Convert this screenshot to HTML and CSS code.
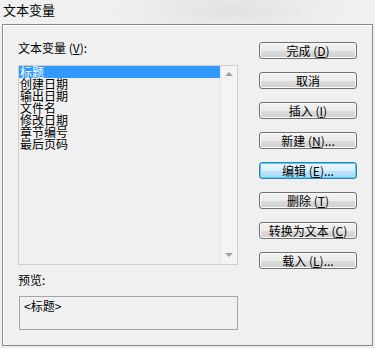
FILE: index.html
```html
<!DOCTYPE html>
<html lang="zh">
<head>
<meta charset="utf-8">
<link rel="stylesheet" href="styles.css">
</head>
<body>
<div class="title">文本变量</div>
<div class="frame">
  <div class="left">
    <div class="label">文本变量 (<u>V</u>):</div>
    <div class="listbox">
      <ul class="items">
        <li class="sel">标题</li>
        <li>创建日期</li>
        <li>输出日期</li>
        <li>文件名</li>
        <li>修改日期</li>
        <li>章节编号</li>
        <li>最后页码</li>
      </ul>
      <div class="scroll">
        <span class="arr up"></span>
        <span class="arr down"></span>
      </div>
    </div>
    <div class="label plabel">预览:</div>
    <div class="preview">&lt;标题&gt;</div>
  </div>
  <div class="buttons">
    <div class="btn">完成 (<u>D</u>)</div>
    <div class="btn">取消</div>
    <div class="btn">插入 (<u>I</u>)</div>
    <div class="btn">新建 (<u>N</u>)...</div>
    <div class="btn def">编辑 (<u>E</u>)...</div>
    <div class="btn">删除 (<u>T</u>)</div>
    <div class="btn">转换为文本 (<u>C</u>)</div>
    <div class="btn">载入 (<u>L</u>)...</div>
  </div>
</div>
</body>
</html>
```
FILE: styles.css
```css
html, body {
  margin: 0;
  padding: 0;
}
body {
  width: 375px;
  height: 348px;
  overflow: hidden;
  background: radial-gradient(ellipse 120px 30px at 230px 10px, #e2e2e2, #f0f0f0 100%) , #f0f0f0;
  font-family: "Noto Sans CJK SC", "Noto Sans", sans-serif;
  font-size: 12px;
  color: #000;
}
.title {
  height: 24px;
  padding-left: 3px;
  font-size: 13px;
  line-height: 20px;
}
.frame {
  margin-left: 2px;
  width: 369px;
  height: 320px;
  border: 1px solid #8a8a8a;
  box-shadow: inset 1px 1px 0 #fff;
  display: flex;
  background: #f0f0f0;
}
.left {
  padding: 16px 0 0 15px;
  width: 220px;
}
.label {
  line-height: 14px;
  height: 14px;
  margin-bottom: 10px;
}
u { text-decoration: underline; }
.listbox {
  height: 198px;
  border: 1px solid #cfcfcf;
  display: flex;
  background: #f0f0f0;
}
.items {
  list-style: none;
  margin: 0;
  padding: 0;
  width: 201px;
}
.items li {
  height: 12px;
  line-height: 12px;
  padding-left: 1px;
}
.items li.sel {
  background: #3399ff;
  color: #fff;
}
.scroll {
  width: 16px;
  border-left: 1px solid #e6e6e6;
  background: #f4f4f4;
  display: flex;
  flex-direction: column;
  justify-content: space-between;
  align-items: center;
  padding: 6px 0 7px;
}
.arr {
  width: 0;
  height: 0;
  border-left: 4px solid transparent;
  border-right: 4px solid transparent;
}
.arr.up { border-bottom: 4px solid #a0a0a0; }
.arr.down { border-top: 4px solid #a0a0a0; }
.plabel {
  margin-top: 8px;
  margin-bottom: 9px;
}
.preview {
  margin-left: 1px;
  height: 32px;
  border: 1px solid #a5a5a5;
  padding: 2px 0 0 4px;
  box-sizing: border-box;
  height: 34px;
  line-height: 14px;
}
.buttons {
  margin-left: 21px;
  padding-top: 17px;
  display: flex;
  flex-direction: column;
  gap: 13px;
}
.btn {
  width: 96px;
  height: 15px;
  border: 1px solid #707070;
  border-radius: 3px;
  background: linear-gradient(#f2f2f2 0%, #ebebeb 50%, #dddddd 51%, #cfcfcf 100%);
  box-shadow: inset 0 0 0 1px #fbfbfb;
  text-align: center;
  line-height: 15px;
  font-size: 12px;
}
.btn.def {
  border-color: #3c7fb1;
  background: linear-gradient(#eaf6fd 0%, #d9f0fc 50%, #bee6fd 51%, #a7d9f5 100%);
  box-shadow: inset 0 0 0 1px #48d0f4;
}
```
